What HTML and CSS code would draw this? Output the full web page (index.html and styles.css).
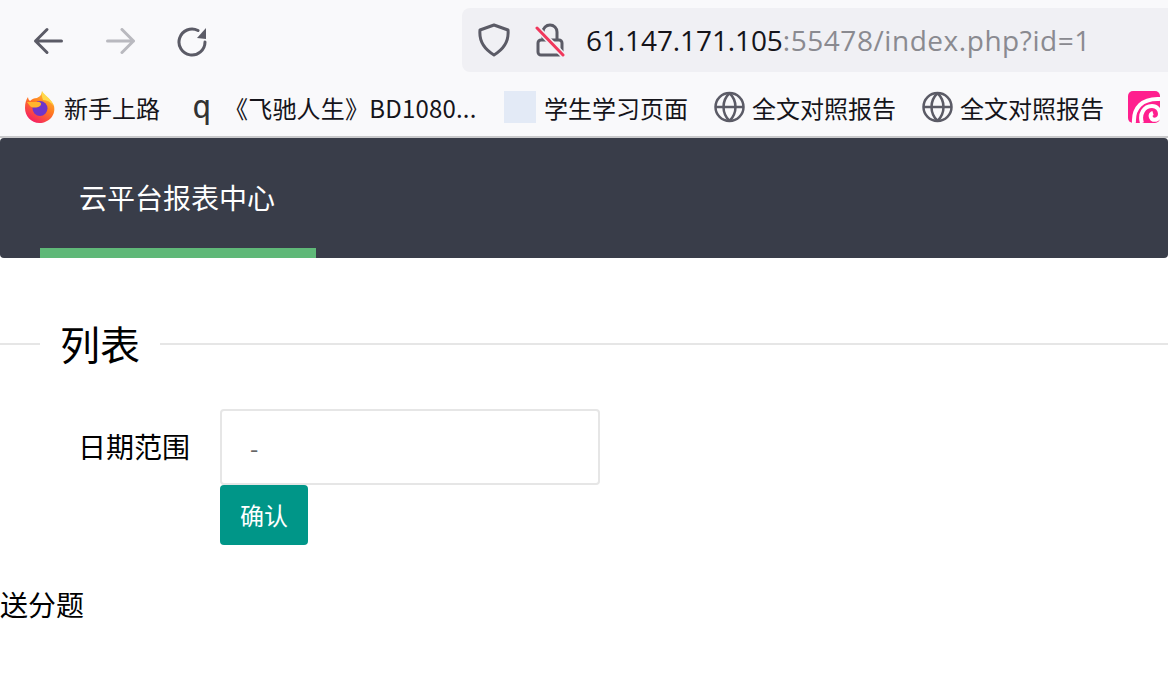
FILE: index.html
```html
<!DOCTYPE html>
<html lang="zh-CN">
<head>
<meta charset="utf-8">
<title>云平台报表中心</title>
<link rel="stylesheet" href="styles.css">
</head>
<body>
<header class="chrome">
  <div class="toolbar">
    <div class="nav-buttons">
      <svg class="tool-icon" viewBox="0 0 32 32"><path d="M29.500 16H3.500M15 4.500 3.500 16 15 27.500" class="stroke"/></svg>
      <svg class="tool-icon dim" viewBox="0 0 32 32"><path d="M3.500 16h26M18 4.500 29.500 16 18 27.500" class="stroke"/></svg>
      <svg class="tool-icon" viewBox="0 0 32 32"><path d="M29 17A13 13 0 1 1 22 5.500" class="stroke"/><path d="M21 13 30 3v11z" class="fill"/></svg>
    </div>
    <div class="urlbar">
      <svg class="shield" viewBox="0 0 32 34"><path d="M16 2 30 7c1 10-4 19-14 25C6 26 1 17 2 7z" class="stroke"/></svg>
      <svg class="lock" viewBox="0 0 32 34"><path d="M9 17V9a7 7 0 0 1 14 0v8M4 20a3 3 0 0 1 3-3h18a3 3 0 0 1 3 3v9a3 3 0 0 1-3 3H7a3 3 0 0 1-3-3z" class="stroke"/><path d="M3 5 29 32" class="slash-gap"/><path d="M3 5 29 32" class="slash"/></svg>
      <span class="url"><span class="host">61.147.171.105</span>:55478/index.php?id=1</span>
    </div>
  </div>
  <div class="bookmarks">
    <a class="bm bm-first">
      <svg class="bm-icon" viewBox="0 0 32 32">
        <defs>
          <linearGradient id="fx" x1="0.8" y1="0" x2="0.2" y2="1"><stop offset="0" stop-color="#ffc93a"/><stop offset="0.45" stop-color="#ff7a1f"/><stop offset="1" stop-color="#f5156c"/></linearGradient>
        </defs>
        <path d="M18 0c0 4 10 8 12 15 2 9-5 17-14.500 17C7 32 1 25 1 17c0-5 1-8 3-11 0 2 1 3 2 4 2-2 4-3 7-3 2-1 5-3 5-7z" fill="url(#fx)"/>
        <path d="M18 0c1 3 9 7 12 15-3-4-7-6-11-6-1-3-2-6-1-9z" fill="#ffd84a"/>
        <circle cx="16" cy="17.500" r="7.500" fill="#6f35c9"/>
        <path d="M3 11h11c3 0 4 2 2 4-3 2-8 2-10 0z" fill="#ffb52e"/>
      </svg>
      <span>新手上路</span>
    </a>
    <a class="bm bm-q">
      <span class="q-glyph">q</span>
      <span class="bm-ellipsis">《飞驰人生》BD1080...</span>
    </a>
    <a class="bm bm-study">
      <span class="blank-icon"></span>
      <span>学生学习页面</span>
    </a>
    <a class="bm bm-report">
      <svg class="bm-icon" viewBox="0 0 32 32"><circle cx="15.500" cy="16" r="14" class="stroke-thin"/><path d="M1.500 16h28M15.500 2c-8 8-8 20 0 28M15.500 2c8 8 8 20 0 28" class="stroke-thin"/></svg>
      <span>全文对照报告</span>
    </a>
    <a class="bm bm-report">
      <svg class="bm-icon" viewBox="0 0 32 32"><circle cx="15.500" cy="16" r="14" class="stroke-thin"/><path d="M1.500 16h28M15.500 2c-8 8-8 20 0 28M15.500 2c8 8 8 20 0 28" class="stroke-thin"/></svg>
      <span>全文对照报告</span>
    </a>
    <svg class="bm-icon pink" viewBox="0 0 32 32"><rect width="32" height="32" rx="5" fill="#ff1f8e"/><path d="M6 32C5 17 14 7 32 8" fill="none" stroke="#fff" stroke-width="4"/><path d="M14 32c-3-9 2-17 10-17 5 0 8 4 8 8 0 5-5 7-8 5-2-2-2-5 1-6" fill="none" stroke="#fff" stroke-width="4"/></svg>
  </div>
</header>
<main class="page">
  <nav class="topnav">
    <a class="topnav-item">云平台报表中心</a>
  </nav>
  <div class="legend-row">
    <h2 class="legend">列表</h2>
  </div>
  <form class="query">
    <div class="field">
      <label class="field-label">日期范围</label>
      <div class="field-input">-</div>
    </div>
    <button type="button" class="btn">确认</button>
  </form>
  <p class="item-text">送分题</p>
</main>
</body>
</html>
```
FILE: styles.css
```css
* { box-sizing: border-box; }
html, body { margin: 0; padding: 0; height: 696px; overflow: hidden; background: #fff; }
body { font-family: "Noto Sans CJK SC", "Noto Sans", sans-serif; color: #000; }

.chrome { background: #f9f9fb; height: 138px; border-bottom: 2px solid #c9c9cb; }
.toolbar { display: flex; height: 80px; padding-top: 8px; align-items: flex-start; }
.nav-buttons { display: flex; width: 462px; padding: 17px 0 0 32px; gap: 40px; }
.tool-icon { width: 32px; height: 32px; }
.tool-icon.dim { opacity: 0.4; }
.stroke { fill: none; stroke: #5b5b66; stroke-width: 3; stroke-linecap: round; stroke-linejoin: round; }
.fill { fill: #5b5b66; }
.stroke-thin { fill: none; stroke: #5b5b66; stroke-width: 2.500; }
.slash { stroke: #f0385c; stroke-width: 3; stroke-linecap: round; fill: none; }
.slash-gap { stroke: #f0f0f4; stroke-width: 6; fill: none; }
.urlbar { flex: 1; height: 64px; background: #f0f0f4; border-radius: 8px 0 0 8px; display: flex; align-items: center; padding-left: 16px; }
.shield { width: 32px; height: 34px; }
.lock { width: 32px; height: 34px; margin-left: 24px; }
.url { margin-left: 20px; font-family: "Open Sans", "Noto Sans", sans-serif; font-size: 28px; letter-spacing: 0.55px; color: #8a8a90; white-space: nowrap; }
.host { color: #15141a; letter-spacing: -0.1px; }

.bookmarks { display: flex; align-items: center; height: 56px; padding: 0 0 2px 24px; font-size: 24px; color: #15141a; white-space: nowrap; overflow: hidden; }
.bm { display: flex; align-items: center; }
.bm-icon { width: 32px; height: 32px; flex: none; }
.bm span:last-child { margin-left: 6px; }
.bm-first span:last-child { margin-left: 8px; }
.bm-first { width: 168px; }
.bm-q { width: 312px; }
.q-glyph { width: 18px; margin-right: 14px; font-family: "DejaVu Sans Mono", monospace; font-size: 32px; text-align: center; color: #333; line-height: 1; }
.bm-q span:last-child { margin-left: 0; letter-spacing: 0.2px; }
.bm-study { width: 210px; }
.blank-icon { width: 32px; height: 32px; background: #e3eaf6; flex: none; }
.bm-study span:last-child { margin-left: 8px; }
.bm-report { width: 208px; }
.pink { margin-left: -2px; }

.topnav { height: 120px; background: #393d49; border-radius: 4px; padding-left: 40px; display: flex; }
.topnav-item { display: flex; align-items: center; height: 120px; padding: 8px 41px 0 39px; border-bottom: 10px solid #5fb878; color: #fff; font-size: 28px; }

.legend-row { display: flex; align-items: center; margin-top: 61px; height: 50px; }
.legend-row::before { content: ""; width: 40px; height: 2px; background: #e6e6e6; }
.legend-row::after { content: ""; flex: 1; height: 2px; background: #e6e6e6; }
.legend { margin: -2px 0 0; padding: 0 20px; font-size: 40px; font-weight: 400; line-height: 50px; }

.query { margin-top: 40px; padding-left: 220px; }
.field { display: flex; position: relative; }
.field-label { position: absolute; left: -142px; top: -1px; width: 112px; line-height: 76px; font-size: 28px; white-space: nowrap; }
.field-input { width: 380px; height: 76px; border: 2px solid #e6e6e6; border-radius: 4px; padding-left: 28px; line-height: 74px; font-size: 24px; color: #666; }
.btn { display: block; width: 88px; height: 60px; border: 0; border-radius: 4px; background: #009688; color: #fff; font: inherit; font-size: 24px; padding: 0 0 2px; }
.item-text { margin: 39px 0 0; font-size: 28px; line-height: 40px; }
```
